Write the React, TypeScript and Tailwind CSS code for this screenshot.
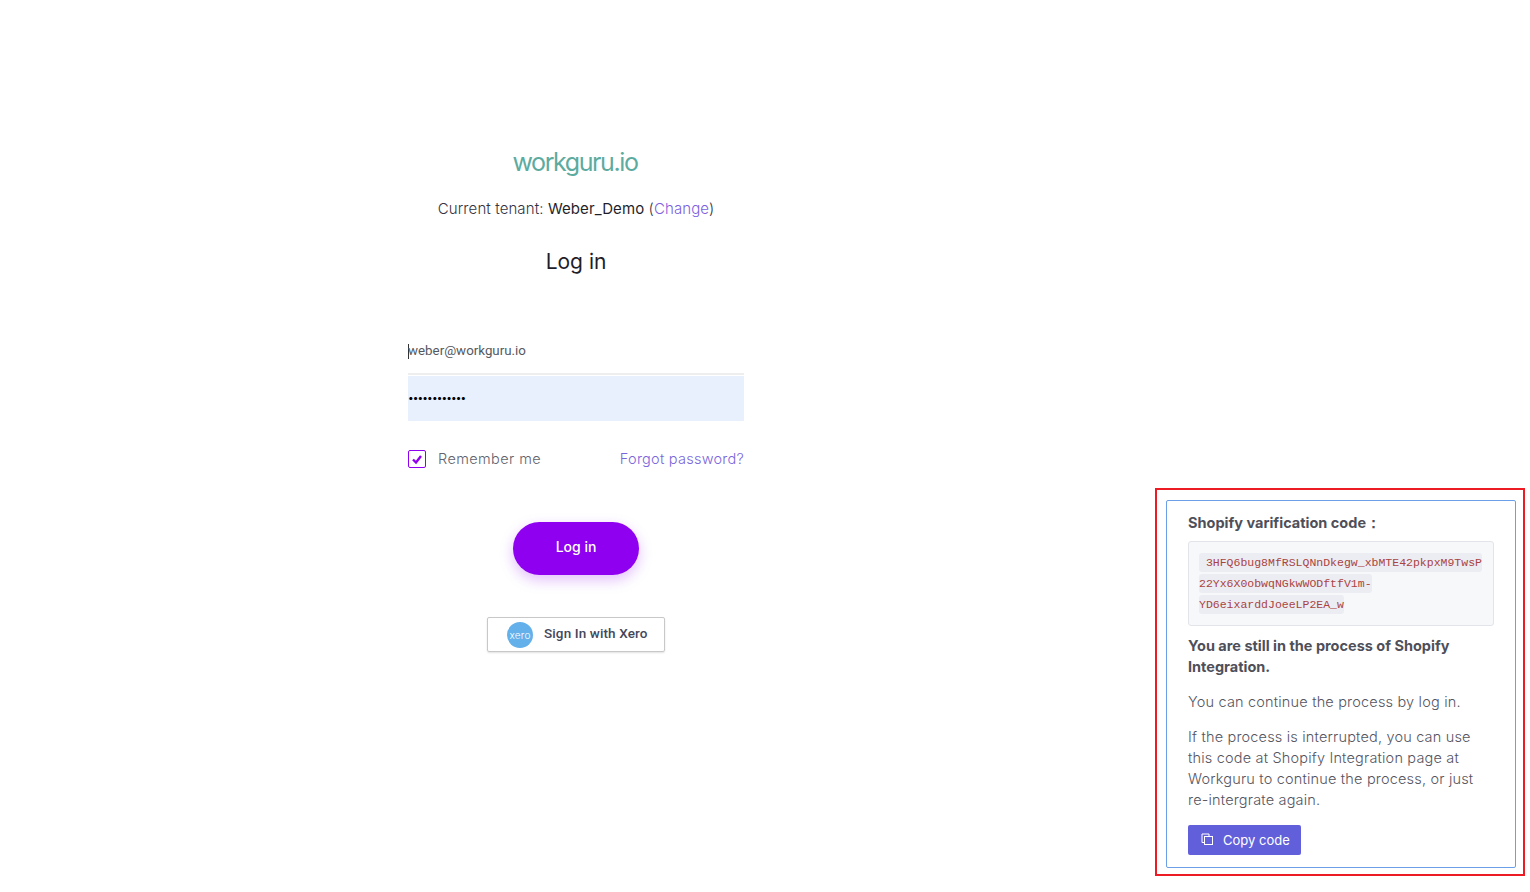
import React from 'react';

const sans = "font-['Inter','Noto_Sans',sans-serif]";

function CopyIcon() {
  return (
    <svg className="-mt-[2px]" width="13" height="13" viewBox="0 0 13 13" fill="none" stroke="#ffffff" strokeWidth="1">
      <path d="M3.5 9.5H1V1h7v2" />
      <rect x="3.5" y="3.5" width="8" height="8" />
    </svg>
  );
}

function XeroLogo() {
  return (
    <span className="flex h-[26px] w-[26px] items-center justify-center rounded-full bg-[#63b0ea] text-[10px] leading-none tracking-[0.2px] text-white font-['Inter',sans-serif] font-light">
      xero
    </span>
  );
}

function LoginForm() {
  return (
    <div className="flex w-[336px] flex-col items-center pt-[148px]">
      <div className="-ml-[2px] h-[28px] text-[25px] font-normal leading-[28px] tracking-[-1.4px] text-[#5dab9f]">workguru.io</div>
      <p className="mt-[22px] h-[21px] text-[15px] font-light leading-[21px] tracking-[0.1px] text-[#33333f]">
        Current tenant: <span className="font-normal text-[#1f1f2b]">Weber_Demo</span> (<span className="text-[#7a5fe0]">Change</span>)
      </p>
      <h1 className="mt-[27px] h-[32px] text-[21px] leading-[32px] font-normal text-[#1e1e2a]">Log in</h1>

      <div className="mt-[51px] w-full">
        <div className="flex h-[46px] items-center border-b-2 border-[#eeeeee] font-['Roboto',sans-serif] text-[13.33px] text-[#55595f]">
          <span className="mr-[-1px] h-[15px] w-px bg-[#333333]" />
          weber@workguru.io
        </div>
        <div className="mt-px flex h-[45px] items-center bg-[#e8f0fe] pb-[4px] text-[10px] leading-none tracking-[-0.85px] text-black">
          ••••••••••••
        </div>
      </div>

      <div className="mt-[28px] flex h-[20px] w-full items-center justify-between text-[14.5px]">
        <div className="flex items-center gap-[12px]">
          <span className="flex h-[18px] w-[18px] items-center justify-center rounded-[2px] border border-[#8f00f0]">
            <svg width="12" height="12" viewBox="0 0 12 12" fill="none" stroke="#8f00f0" strokeWidth="2.4">
              <path d="M2 6.5 5 9.5 10 3" />
            </svg>
          </span>
          <span className="font-light tracking-[0.4px] text-[#63636d]">Remember me</span>
        </div>
        <span className="font-light tracking-[0.25px] text-[#7a66dc]">Forgot password?</span>
      </div>

      <div className="mt-[53px] flex h-[53px] w-[126px] items-center justify-center rounded-full bg-[#8f00f0] pb-[4px] text-[14px] font-medium text-white shadow-[0_5px_14px_rgba(143,0,240,0.25)]">
        Log in
      </div>

      <div className="mt-[42px] flex h-[35px] w-[178px] items-center gap-[11px] rounded-[2px] border border-[#c8c8c8] pl-[19px] font-['Roboto',sans-serif] text-[13.5px] font-medium tracking-[0.12px] text-[#44475a] shadow-[0_1px_2px_rgba(0,0,0,0.12)]">
        <XeroLogo />
        <span className="-mt-[2px]">Sign In with Xero</span>
      </div>
    </div>
  );
}

function ShopifyNotice() {
  return (
    <div className="mb-[16px] mr-[5px] w-[370px] border-2 border-[#ed1c24] pb-[6px] pl-[9px] pr-[7px] pt-[10px]">
      <div className="rounded-[2px] border border-[#6b9fe8] px-[21px] pb-[12px] pt-[11px] text-[14.5px] leading-[21px] text-[#55555f]">
        <div className="font-bold text-[#4f4f59]">Shopify varification code：</div>
        <div className="mt-[8px] h-[85px] rounded-[3px] border border-[#e2e4ea] bg-[#f7f8fa] py-[10px] pl-[10px] pr-[10px] font-['DejaVu_Sans_Mono','Liberation_Mono',monospace] text-[11.5px] leading-[21px] text-[#a94442]">
          <code className="rounded-[3px] bg-[#ecedf2] py-[3px] [box-decoration-break:clone]">&nbsp;3HFQ6bug8MfRSLQNnDkegw_xbMTE42pkpxM9TwsP<br />22Yx6X0obwqNGkwWODftfV1m-<br />YD6eixarddJoeeLP2EA_w</code>
        </div>
        <p className="mt-[9px] font-bold text-[#4f4f59]">You are still in the process of Shopify Integration.</p>
        <p className="mt-[14px] font-light tracking-[0.18px]">You can continue the process by log in.</p>
        <p className="mt-[14px] font-light tracking-[0.18px]">If the process is interrupted, you can use this code at Shopify Integration page at Workguru to continue the process, or just<br />re-intergrate again.</p>
        <div className="mt-[15px] flex h-[30px] w-[113px] items-center gap-[9px] rounded-[2px] bg-[#625fdb] pl-[13px] text-[13px] text-white">
          <CopyIcon />
          Copy code
        </div>
      </div>
    </div>
  );
}

export default function App() {
  return (
    <div className={`flex h-[892px] w-full overflow-hidden bg-white ${sans}`}>
      <div className="flex w-[1152px] justify-center">
        <LoginForm />
      </div>
      <div className="flex flex-1 flex-col items-end justify-end">
        <ShopifyNotice />
      </div>
    </div>
  );
}
